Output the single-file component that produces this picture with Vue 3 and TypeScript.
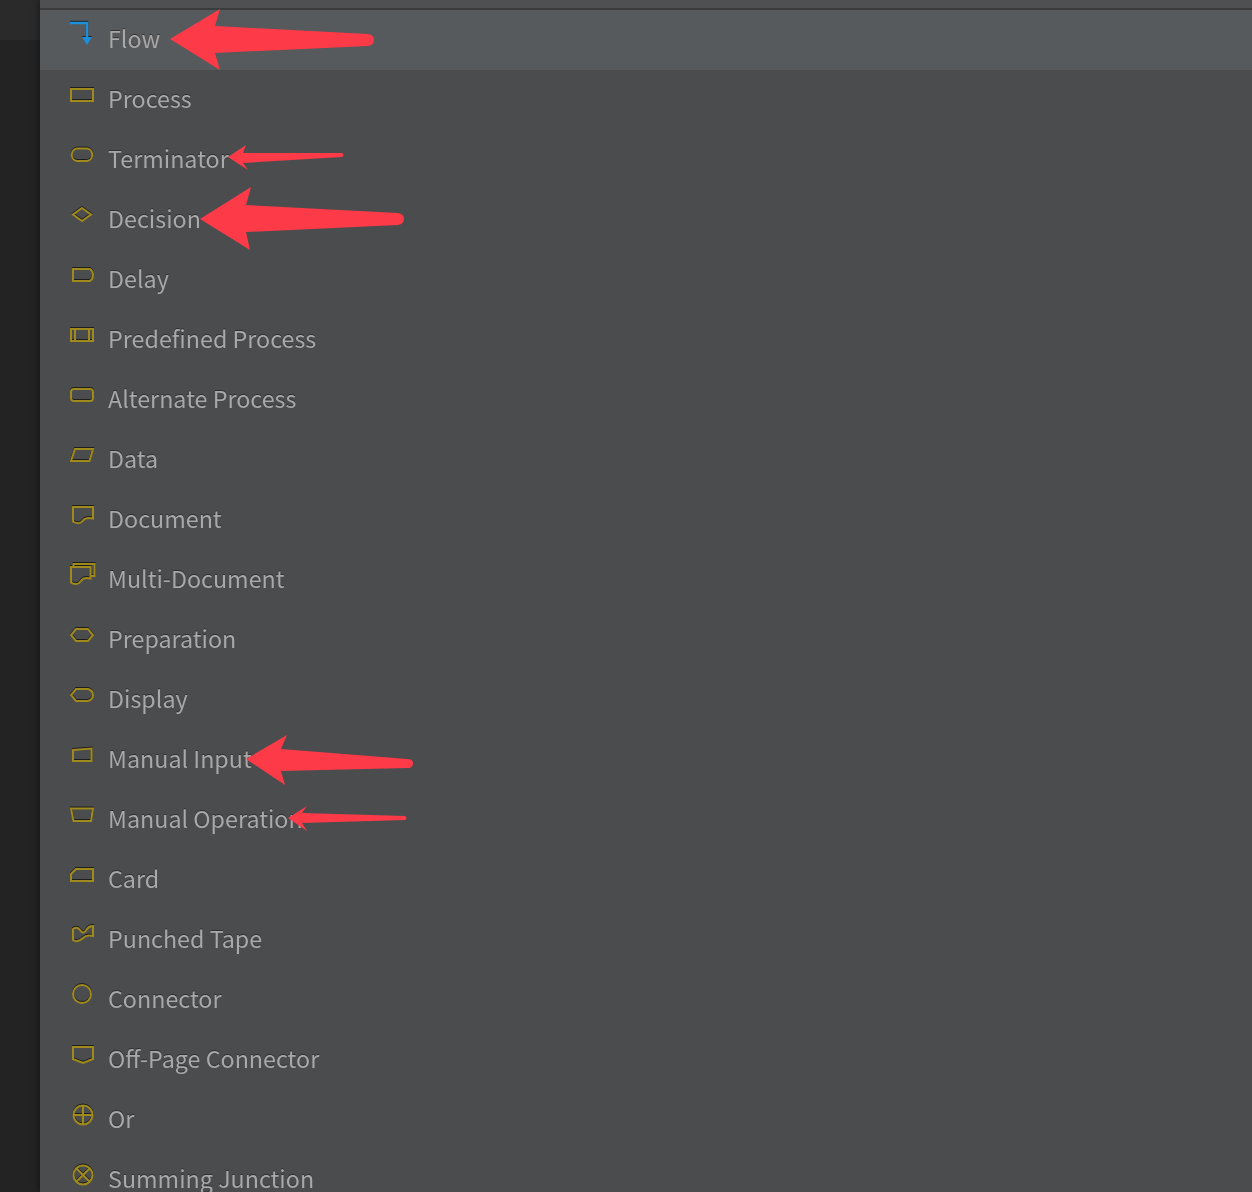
<script setup lang="ts">
interface Item { label: string; d: string; blue?: boolean; fill?: string }
const circle = (cx: number, cy: number, r: number) =>
  `M${cx - r} ${cy}A${r} ${r} 0 1 1 ${cx + r} ${cy}A${r} ${r} 0 1 1 ${cx - r} ${cy}Z`
const items: Item[] = [
  { label: 'Flow', d: 'M0 3H17V20', blue: true, fill: 'M12 17H22L17 25Z' },
  { label: 'Process', d: 'M1 9H23V21H1Z' },
  { label: 'Terminator', d: 'M7 8.5H17A6 6.3 0 0 1 17 21H7A6 6.3 0 0 1 7 8.5Z' },
  { label: 'Decision', d: 'M12 8L21 14.5L12 21L3 14.5Z' },
  { label: 'Delay', d: 'M3 9H20Q23 11 23 15Q23 19 20 21H3Z' },
  { label: 'Predefined Process', d: 'M1 9H23V21H1ZM5 9V21M19 9V21' },
  { label: 'Alternate Process', d: 'M4 9H20Q23 9 23 12V18Q23 21 20 21H4Q1 21 1 18V12Q1 9 4 9Z' },
  { label: 'Data', d: 'M5 9H23L19.500 21H1Z' },
  { label: 'Document', d: 'M3 7H23V18.500C18 17.500 15 18 13 20.500C11 23.500 7 24 3 21.500Z' },
  { label: 'Multi-Document', d: 'M1 7H20.500V18.500C16 17.500 13 18 11 21C9 24 5 25 1 22.500ZM3.500 7V4H24.500V16H20.500' },
  { label: 'Preparation', d: 'M6 9H18L23 15L18 21H6L1 15Z' },
  { label: 'Display', d: 'M6 9H18Q23 10.500 23 15Q23 19.500 18 21H6L1 15Z' },
  { label: 'Manual Input', d: 'M3 10L21.500 8.500V21H3Z' },
  { label: 'Manual Operation', d: 'M1 8.500H23L21 21H3.500Z' },
  { label: 'Card', d: 'M6 9H23V21H1V14Z' },
  { label: 'Punched Tape', d: 'M3 9C6 7 8 7 10 10C12 13 14 14 17 9C19 6 21 6 23 6V16C19 15 16 15 13 18C10 21 6 22 3 20Z' },
  { label: 'Connector', d: circle(12, 14, 9) },
  { label: 'Off-Page Connector', d: 'M3 7H23V19L13 23L3 19Z' },
  { label: 'Or', d: `${circle(13, 15, 9.5)}M13 5.500V24.500M3.500 15H22.500` },
  { label: 'Summing Junction', d: `${circle(13, 15, 9.5)}M6.300 8.300L19.700 21.700M19.700 8.300L6.300 21.700` },
]
const arrows: string[] = [
  'M170 39L220 9L215 26L368 34Q374 35 374 40Q374 45 368 46L215 53L220 70Z',
  'M228 157L246 145L243 153L342 153Q345 155 342 157L243 163L248 170Z',
  'M200 219L251 187L246 205L398 213Q404 214 404 219Q404 224 398 225L246 232L250 250Z',
  'M246 759L287 735L281 749L407 759Q413 759 413 763Q413 768 408 768L281 771L285 785Z',
  'M288 818L307 806L302 813L405 816Q408 818 405 820L302 823L307 831Z',
]
</script>

<template>
  <div class="page">
    <aside class="rail"><div class="rail-top"></div></aside>
    <div class="menu">
      <div class="menu-top"></div>
      <ul class="list">
        <li v-for="(item, i) in items" :key="item.label" class="row" :class="{ active: i === 0 }">
          <svg class="icon" :class="{ blue: item.blue }" width="26" height="32" viewBox="0 0 26 32" fill="none">
            <path :d="item.d" />
            <path v-if="item.fill" :d="item.fill" class="head" />
          </svg>
          <span class="label">{{ item.label }}</span>
        </li>
      </ul>
    </div>
    <svg class="arrows" width="1252" height="1192" viewBox="0 0 1252 1192">
      <path v-for="a in arrows" :key="a" :d="a" />
    </svg>
  </div>
</template>

<style>
html, body { margin: 0; background: #4b4c4e; overflow: hidden; }
</style>

<style scoped>
.page {
  position: relative;
  display: flex;
  width: 1252px;
  height: 1192px;
  overflow: hidden;
  font-family: "Noto Sans CJK SC", "Noto Sans", sans-serif;
}
.rail { width: 40px; flex: none; background: #232323; }
.rail-top { height: 40px; background: #2a2a2a; }
.menu {
  flex: 1;
  min-width: 0;
  background: #4b4c4e;
  box-shadow: -3px 0 5px rgba(0, 0, 0, 0.25);
  position: relative;
}
.menu-top { height: 8px; background: #4f5052; border-bottom: 2px solid #3a3b3c; }
.list { list-style: none; margin: 0; padding: 0; }
.row {
  display: flex;
  align-items: center;
  gap: 12px;
  height: 60px;
  padding-left: 30px;
}
.row.active { background: #565a5c; }
.icon {
  flex: none;
  align-self: flex-start;
  margin-top: 10px;
  stroke: #a08a1c;
  stroke-width: 2;
  filter: drop-shadow(0 -1px 0 rgba(25, 25, 25, 0.9)) blur(0.3px);
}
.icon.blue { stroke: #1b8fdc; stroke-width: 2.4; }
.head { fill: #1b8fdc; stroke: none; }
.label {
  font-size: 23.3px;
  line-height: 56px;
  margin-bottom: 4px;
  color: #a9a9a9;
  text-shadow: 0 -1px 0 rgba(35, 35, 35, 0.7);
  white-space: nowrap;
  filter: blur(0.4px);
}
.arrows { position: absolute; left: 0; top: 0; fill: #fd3a48; pointer-events: none; }
</style>
